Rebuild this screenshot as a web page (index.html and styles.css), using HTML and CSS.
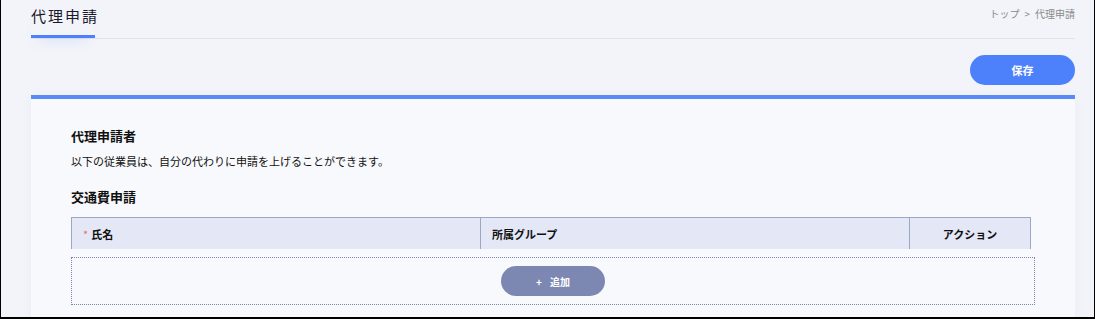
FILE: index.html
```html
<!DOCTYPE html>
<html lang="ja">
<head>
  <meta charset="UTF-8">
  <title>代理申請</title>
  <link rel="stylesheet" href="styles.css">
</head>
<body>
  <div class="frame">
    <!-- Page Header -->
    <div class="page-head">
      <div class="tab-title">代理申請</div>
      <div class="breadcrumb">トップ<span class="sep">&gt;</span>代理申請</div>
    </div>

    <!-- Toolbar -->
    <div class="toolbar">
      <button class="save-btn">保存</button>
    </div>

    <!-- Card -->
    <div class="card">
      <h3 class="section-title">代理申請者</h3>
      <p class="section-desc">以下の従業員は、自分の代わりに申請を上げることができます。</p>
      <h3 class="section-title sub">交通費申請</h3>

      <div class="table">
        <div class="table-head">
          <div class="col col-name"><span class="required">*</span>氏名</div>
          <div class="col col-group">所属グループ</div>
          <div class="col col-action">アクション</div>
        </div>
      </div>

      <div class="add-box">
        <button class="add-btn"><span class="plus">+</span>追加</button>
      </div>
    </div>
  </div>
</body>
</html>
```

FILE: styles.css
```css
* {
  margin: 0;
  padding: 0;
  box-sizing: border-box;
}

body {
  background: #ffffff;
  font-family: "Noto Sans CJK JP", "Noto Sans", sans-serif;
  color: #111;
  overflow: hidden;
}

.frame {
  height: 319px;
  background: #f3f4f9;
  border-left: 1px solid #000;
  border-right: 1px solid #000;
  border-bottom: 2px solid #000;
  padding: 0 19px 0 30px;
  overflow: hidden;
}

/* Page Header */
.page-head {
  display: flex;
  justify-content: space-between;
  align-items: flex-start;
  height: 39px;
  border-bottom: 1px solid #dfe2ea;
}

.tab-title {
  width: 64px;
  height: 38px;
  padding-top: 5px;
  font-size: 15px;
  letter-spacing: 2px;
  white-space: nowrap;
  color: #1a1a2a;
  border-bottom: 3px solid #4d80fb;
  box-shadow: 0 10px 14px -8px rgba(77, 128, 251, 0.15);
}

.breadcrumb {
  padding-top: 6px;
  font-size: 10px;
  color: #8a8a8a;
}

.breadcrumb .sep {
  margin: 0 5px;
}

/* Toolbar */
.toolbar {
  display: flex;
  justify-content: flex-end;
  padding: 16px 0 10px;
}

.save-btn {
  width: 105px;
  height: 30px;
  border: none;
  border-radius: 15px;
  background: #4d80fb;
  color: #fff;
  font-family: inherit;
  font-size: 11px;
  font-weight: bold;
}

/* Card */
.card {
  height: 240px;
  background: #f8f9fc;
  border-top: 4px solid #5a8afa;
  padding: 27px 40px 0 40px;
  box-shadow: 0 0 12px rgba(0, 0, 0, 0.03);
}

.section-title {
  font-size: 13px;
  font-weight: bold;
  line-height: 20px;
}

.section-title.sub {
  margin-top: 17px;
}

.section-desc {
  font-size: 11px;
  line-height: 18px;
  margin-top: 6px;
}

/* Table */
.table {
  margin-top: 10px;
  width: 960px;
}

.table-head {
  display: flex;
  height: 32px;
  background: #e4e8f6;
  border: 1px solid #9aa8c4;
  border-bottom: none;
}

.col {
  display: flex;
  align-items: center;
  font-size: 11px;
  font-weight: bold;
  padding-left: 11px;
}

.col-name {
  width: 409px;
  border-right: 1px solid #9aa8c4;
}

.col-group {
  width: 429px;
  border-right: 1px solid #9aa8c4;
}

.col-action {
  flex: 1;
  justify-content: center;
  padding-left: 0;
}

.required {
  color: #f06a6a;
  margin-right: 3px;
  font-weight: normal;
}

.add-box {
  margin-top: 8px;
  width: 964px;
  height: 48px;
  border: 1px dotted #7a86ad;
  display: flex;
  justify-content: center;
  align-items: center;
}

.add-btn {
  width: 104px;
  height: 30px;
  border: none;
  border-radius: 15px;
  background: #7c87b2;
  color: #fff;
  font-family: inherit;
  font-size: 10px;
  font-weight: bold;
}

.add-btn .plus {
  margin-right: 8px;
}
```
